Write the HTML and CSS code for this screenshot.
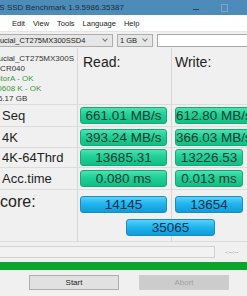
FILE: index.html
```html
<!DOCTYPE html>
<html lang="en">
<head>
    <meta charset="UTF-8">
    <title>AS SSD Benchmark</title>
    <link rel="stylesheet" href="styles.css">
</head>
<body>
    <div class="window">
        <div class="titlebar">
            <span class="title">AS SSD Benchmark 1.9.5986.35387</span>
            <span class="ctl min"></span>
            <span class="ctl max"></span>
        </div>
        <div class="menubar">
            <span>Edit</span>
            <span>View</span>
            <span>Tools</span>
            <span>Language</span>
            <span>Help</span>
        </div>
        <div class="toolbar">
            <div class="select drive"><span class="cut">Crucial_CT275MX300SSD4</span><i class="arrow"></i></div>
            <div class="select size"><span>1 GB</span><i class="arrow"></i></div>
            <div class="textbox"></div>
        </div>

        <div class="grid">
            <div class="info">
                <div class="cut2">Crucial_CT275MX300S</div>
                <div class="cut3">M0CR040</div>
                <div class="ok cut3">iaStorA - OK</div>
                <div class="ok cut3">110608 K - OK</div>
                <div class="cut3">256.17 GB</div>
            </div>
            <div class="head">Read:</div>
            <div class="head w">Write:</div>

            <div class="label">Seq</div>
            <div class="cell"><div class="box">661.01 MB/s</div></div>
            <div class="cell w"><div class="box">612.80 MB/s</div></div>

            <div class="label">4K</div>
            <div class="cell"><div class="box">393.24 MB/s</div></div>
            <div class="cell w"><div class="box">366.03 MB/s</div></div>

            <div class="label">4K-64Thrd</div>
            <div class="cell"><div class="box">13685.31</div></div>
            <div class="cell w"><div class="box">13226.53</div></div>

            <div class="label">Acc.time</div>
            <div class="cell"><div class="box">0.080 ms</div></div>
            <div class="cell w"><div class="box">0.013 ms</div></div>

            <div class="label score">core:</div>
            <div class="cell scorecell">
                <div class="box blue">14145</div>
            </div>
            <div class="cell w scorecell">
                <div class="box blue">13654</div>
            </div>
            <div class="total"><div class="box blue">35065</div></div>
        </div>

        <div class="status">
            <div class="statusbox"></div>
            <span class="dash">-:--:--</span>
        </div>
        <div class="progress"></div>
        <div class="buttons">
            <div class="btn">Start</div>
            <div class="btn off">Abort</div>
        </div>
    </div>
</body>
</html>
```

FILE: styles.css
```css
body {
    margin: 0;
    font-family: "Liberation Sans", Arial, sans-serif;
    background: #f0f0f0;
}
.window {
    width: 247px;
    height: 296px;
    overflow: hidden;
    background: #f0f0f0;
}
.titlebar {
    height: 15px;
    background: #4d8cb9;
    display: flex;
    align-items: center;
    font-size: 8px;
    color: #1c2f3f;
    white-space: nowrap;
}
.title {
    margin-left: -6px;
    flex: 1;
}
.ctl {
    width: 10px;
    height: 8px;
    margin-right: 18px;
    position: relative;
}
.min::after {
    content: "";
    position: absolute;
    left: 2px;
    top: 5px;
    width: 6px;
    height: 1px;
    background: #2a4355;
}
.max::after {
    content: "";
    position: absolute;
    left: 2px;
    top: 0;
    width: 5px;
    height: 6px;
    border: 1px solid #7fa6c4;
}
.menubar {
    height: 16px;
    background: #fff;
    display: flex;
    align-items: center;
    gap: 8px;
    padding-left: 12px;
    font-size: 7.5px;
    color: #222;
}
.toolbar {
    height: 16px;
    display: flex;
    align-items: center;
    gap: 4px;
    border-top: 1px solid #e4e4e4;
}
.select {
    height: 13px;
    box-sizing: border-box;
    border: 1px solid #adadad;
    background: #e6e6e6;
    display: flex;
    align-items: center;
    font-size: 7.5px;
    color: #222;
    overflow: hidden;
    white-space: nowrap;
}
.drive {
    width: 113px;
    border-left: none;
}
.drive .cut {
    margin-left: -8px;
    flex: 1;
}
.size {
    width: 36px;
    padding-left: 2px;
}
.size span {
    flex: 1;
}
.arrow {
    width: 3px;
    height: 3px;
    border-right: 1px solid #777;
    border-bottom: 1px solid #777;
    transform: rotate(45deg);
    margin: -3px 5px 0 0;
}
.textbox {
    flex: 1;
    height: 13px;
    box-sizing: border-box;
    background: #fff;
    border: 1px solid #a8a8a8;
    border-right: none;
}
.grid {
    display: grid;
    grid-template-columns: 78px 94px 75px;
    grid-template-rows: 57px 22px 21px 20px 22px 52px;
}
.grid > div {
    border-bottom: 1px solid #dcdcdc;
    box-sizing: border-box;
}
.info {
    font-size: 8px;
    line-height: 10px;
    color: #333;
    white-space: nowrap;
    overflow: hidden;
    padding-top: 6px;
    border-right: 1px solid #d6d6d6;
}
.cut2 {
    margin-left: -10px;
}
.cut3 {
    margin-left: -11px;
}
.ok {
    color: #3c9a3c;
}
.head {
    font-size: 14px;
    color: #222;
    padding: 6px 0 0 5px;
    border-right: 1px solid #d6d6d6;
}
.head.w,
.cell.w {
    border-right: none;
    padding-left: 3px;
}
.label {
    grid-column: 1;
    font-size: 13px;
    color: #222;
    padding-left: 2px;
    display: flex;
    align-items: center;
    border-right: 1px solid #d6d6d6;
}
.label.score {
    grid-row: 6;
    font-size: 16px;
    align-items: flex-start;
    padding: 3px 0 0 0;
}
.cell {
    grid-column: 2;
    display: flex;
    align-items: center;
    padding: 0 4px 0 2px;
    border-right: 1px solid #d6d6d6;
}
.cell.w {
    grid-column: 3;
}
.box {
    flex: 1;
    height: 17px;
    box-sizing: border-box;
    border: 1px solid #17a77a;
    border-radius: 3px;
    background: linear-gradient(#4be3b0, #1fcf95 45%, #0fbf84);
    font-size: 13.5px;
    color: #1d3b32;
    text-align: center;
    line-height: 16px;
    white-space: nowrap;
}
.box.blue {
    border-color: #1a8cc4;
    background: linear-gradient(#56d3fb, #23b4ee 45%, #0d9dd9);
    color: #10304a;
}
.scorecell {
    grid-row: 6;
    align-items: flex-start;
    padding-top: 6px;
}
.grid > .total {
    grid-row: 6;
    grid-column: 2 / 4;
    border: none;
    display: flex;
    align-items: flex-end;
    padding: 0 32px 5px 48px;
    margin-bottom: 1px;
}
.status {
    display: flex;
    align-items: center;
    height: 20px;
    gap: 10px;
}
.statusbox {
    width: 214px;
    height: 10px;
    background: #f2f2f2;
    border: 1px solid #d2d2d2;
    border-left: none;
}
.dash {
    font-size: 6px;
    color: #777;
}
.progress {
    height: 8px;
    background: #0aa52a;
}
.buttons {
    display: flex;
    gap: 20px;
    padding: 5px 0 0 29px;
}
.btn {
    width: 90px;
    height: 15px;
    box-sizing: border-box;
    border: 1px solid #adadad;
    background: #e1e1e1;
    font-size: 8px;
    color: #222;
    text-align: center;
    line-height: 13px;
}
.btn.off {
    border-color: #cfcfcf;
    background: #cccccc;
    color: #a0a0a0;
}
```
